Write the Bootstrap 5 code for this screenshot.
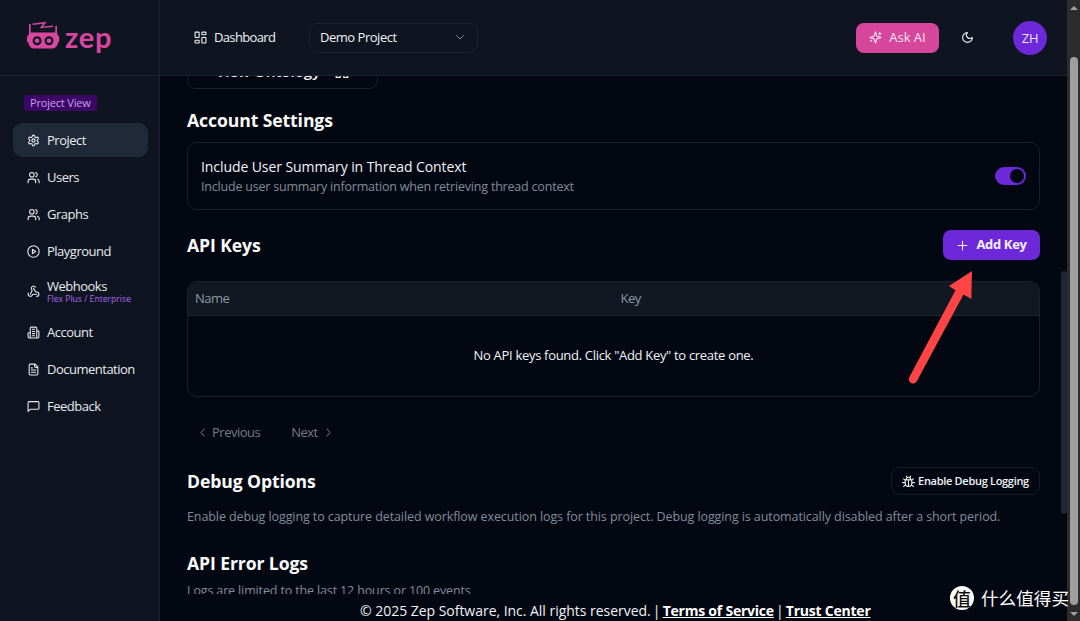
<!DOCTYPE html>
<html lang="en">
<head>
<meta charset="utf-8">
<meta name="viewport" content="width=device-width, initial-scale=1">
<title>Zep – Project</title>
<link href="https://cdn.jsdelivr.net/npm/bootstrap@5.3.0/dist/css/bootstrap.min.css" rel="stylesheet">
<style>
  :root { --page:#030711; --panel:#0e1420; --line:#1a222f; --violet:#6d28d9; --muted:#828c99; }
  body { font-family:"Open Sans","Noto Sans",sans-serif; font-size:13px; line-height:18px; background:var(--page); color:#f1f3f6; }
  svg { flex:none; }
  .ic { fill:none; stroke:currentColor; stroke-width:2; stroke-linecap:round; stroke-linejoin:round; }
  .sidebar { width:160px; background:var(--panel); border-right:1px solid var(--line); }
  .brand { height:76px; padding:0 0 0 27px; border-bottom:1px solid #1c2533; color:#d946a0; }
  .brand-name { font-family:Lato,sans-serif; font-weight:700; font-size:29px; line-height:36px; letter-spacing:.7px; }
  .view-tag { background:#3b0764; color:#c9a0f5; border-radius:3px; font-size:11px; line-height:16px; padding:0 6px; width:73px; margin:19px 0 12px 24px; white-space:nowrap; letter-spacing:-.18px; }
  .side-nav { gap:3px; padding:0 11px 0 13px; }
  .side-nav .nav-link { height:34px; padding:0 0 0 14px; gap:7px; border-radius:9px; color:#e8ebef; white-space:nowrap; font-weight:500; letter-spacing:-.5px; }
  .side-nav .nav-link.active { background:#1f2937; }
  .side-nav .nav-link.tall { height:41px; }
  .plan { font-size:8.5px; line-height:10px; color:#b06af0; letter-spacing:.05px; }
  .topbar { height:76px; background:var(--panel); border-bottom:1px solid #1c2533; padding:0 20px 0 34px; }
  .dash { width:62px; white-space:nowrap; font-weight:500; letter-spacing:-.65px; padding-bottom:1px; }
  .project-select { width:169px; height:30px; margin-left:33px; padding:0 11px 1px 10px; border:1px solid #1c2431; border-radius:9px; font-weight:500; letter-spacing:-.48px; }
  .ask { width:83px; height:30px; border-radius:8px; background:#d6479c; color:#fbe4f2; }
  .avatar { width:34px; height:34px; background:var(--violet); color:#ece4fb; letter-spacing:-.3px; }
  .scroll-area { height:518px; padding:0 27px; }
  .ontology { width:191px; height:36px; margin-top:-23px; border:1px solid var(--line); border-radius:9px; font-size:15px; font-weight:600; }
  .title-row { height:30px; }
  h2 { font-size:17.6px; line-height:24px; font-weight:700; margin:0 0 1px; color:#fafafa; letter-spacing:-.1px; }
  .panel-box { border:1px solid var(--line); border-radius:10px; }
  .setting { height:68px; margin-top:7px; padding:0 13px 0; }
  .set-name { font-size:14px; line-height:20px; font-weight:500; letter-spacing:-.08px; }
  .set-desc { font-size:12.5px; line-height:19px; letter-spacing:-.2px; }
  .dim { color:var(--muted); }
  .toggle { width:31px; height:18px; background:var(--violet); padding:2px; }
  .knob { width:14px; height:14px; background:var(--page); }
  .add { width:97px; height:30px; border-radius:8px; background:var(--violet); font-weight:700; color:#f5f0fe; letter-spacing:-.33px; }
  .keys { height:116px; margin-top:21px; }
  .keys-head { height:34px; background:#111822; border-bottom:1px solid #1c2531; padding:0 7px 1px; color:#8e97a3; font-weight:500; letter-spacing:-.5px; }
  .empty { padding-top:30px; font-weight:500; letter-spacing:-.31px; }
  .pager { height:30px; margin-top:20px; padding:0 0 0 13px; gap:31px; color:#747b86; font-weight:500; letter-spacing:-.5px; }
  .debug-btn { width:149px; height:28px; border:1px solid #171e2a; border-radius:9px; font-size:11px; font-weight:600; white-space:nowrap; letter-spacing:-.3px; }
  .long { font-size:12.5px; letter-spacing:-.09px; }
  .logs { font-size:12.5px; letter-spacing:-.14px; }
  .foot { height:27px; padding:4px 0 0 200px; font-size:14px; line-height:26px; white-space:nowrap; font-weight:500; letter-spacing:-.03px; }
  .foot a { color:#fff; font-weight:700; letter-spacing:-.23px; }
  .sep { width:12px; text-align:center; }
  .inner-thumb { left:1061px; top:271px; width:6px; height:243px; background:#1e2735; border-radius:3px; }
  .gutter { width:13px; background:#2c2c2c; padding:6px 0 5px; }
  .gutter-thumb { width:8px; height:548px; margin-top:47px; background:#9f9f9f; border-radius:4px; }
  .pointer-arrow { left:900px; top:262px; }
  .stamp { left:950px; top:585px; gap:7px; font-family:"Noto Sans CJK SC",sans-serif; font-size:17.6px; line-height:26px; color:#fff; }
  .stamp-seal { width:24px; height:24px; background:#fff; color:#111; font-size:18px; line-height:24px; font-weight:500; }
</style>
</head>
<body class="overflow-hidden">
<div class="d-flex vh-100 position-relative overflow-hidden">

  <aside class="sidebar flex-shrink-0">
    <div class="brand d-flex">
      <svg width="33" height="29" viewBox="0 0 33 29" style="margin-top:21px" fill="currentColor">
        <path d="M2 3h1.700v8.500h24.600V5H30v7.500l1.300 2.200.9 1v5l-1 .6c-.7 3.500-2.600 6.200-6 6.200H7c-3.400 0-5-2.700-5.800-6.200L0 20.700v-5l1-1 1-2.200z"/>
        <path d="M5.500 3.200 18 1.800 14.300 6.400 26 5.200" fill="none" stroke="currentColor" stroke-width="1.500"/>
        <g fill="none" stroke="#0e1420" stroke-width="2.200"><circle cx="10.100" cy="19.700" r="3.400"/><circle cx="22" cy="19.700" r="3.400"/></g>
      </svg>
      <span class="brand-name" style="margin:19px 0 0 5px">zep</span>
    </div>
    <div class="view-tag">Project View</div>
    <nav class="side-nav nav flex-column">
      <a class="nav-link active d-flex align-items-center" href="#"><svg class="ic" width="13" height="13" viewBox="0 0 24 24"><path d="M12.220 2h-.44a2 2 0 0 0-2 2v.18a2 2 0 0 1-1 1.730l-.43.25a2 2 0 0 1-2 0l-.15-.08a2 2 0 0 0-2.730.73l-.22.38a2 2 0 0 0 .73 2.730l.15.1a2 2 0 0 1 1 1.720v.51a2 2 0 0 1-1 1.740l-.15.09a2 2 0 0 0-.73 2.730l.22.38a2 2 0 0 0 2.730.73l.15-.08a2 2 0 0 1 2 0l.43.25a2 2 0 0 1 1 1.730V20a2 2 0 0 0 2 2h.44a2 2 0 0 0 2-2v-.18a2 2 0 0 1 1-1.730l.43-.25a2 2 0 0 1 2 0l.15.08a2 2 0 0 0 2.730-.73l.22-.39a2 2 0 0 0-.73-2.730l-.15-.08a2 2 0 0 1-1-1.740v-.5a2 2 0 0 1 1-1.740l.15-.09a2 2 0 0 0 .73-2.730l-.22-.38a2 2 0 0 0-2.730-.73l-.15.08a2 2 0 0 1-2 0l-.43-.25a2 2 0 0 1-1-1.730V4a2 2 0 0 0-2-2z"/><circle cx="12" cy="12" r="3"/></svg>Project</a>
      <a class="nav-link d-flex align-items-center" href="#"><svg class="ic" width="13" height="13" viewBox="0 0 24 24"><path d="M16 21.500v-2a4.500 4.500 0 0 0-4.500-4.500h-5A4.500 4.500 0 0 0 2 19.500v2"/><circle cx="9" cy="7" r="4.200"/><path d="M22.500 21.500v-2a4.500 4.500 0 0 0-3.300-4.300M16 3a4.200 4.200 0 0 1 0 8"/></svg>Users</a>
      <a class="nav-link d-flex align-items-center" href="#"><svg class="ic" width="13" height="13" viewBox="0 0 24 24"><path d="M16 21.500v-2a4.500 4.500 0 0 0-4.500-4.500h-5A4.500 4.500 0 0 0 2 19.500v2"/><circle cx="9" cy="7" r="4.200"/><path d="M22.500 21.500v-2a4.500 4.500 0 0 0-3.300-4.300M16 3a4.200 4.200 0 0 1 0 8"/></svg>Graphs</a>
      <a class="nav-link d-flex align-items-center" href="#"><svg class="ic" width="13" height="13" viewBox="0 0 24 24"><circle cx="12" cy="12" r="10.500"/><path d="m10 8 6 4-6 4z"/></svg>Playground</a>
      <a class="nav-link tall d-flex align-items-center" href="#"><svg class="ic" width="13" height="13" viewBox="0 0 24 24"><path d="M18 16.980h-5.990c-1.100 0-1.950.94-2.480 1.900A4 4 0 0 1 2 17c.01-.7.200-1.400.57-2"/><path d="m6 17 3.130-5.780c.53-.97.1-2.180-.5-3.100a4 4 0 1 1 6.890-4.060"/><path d="m12 6 3.130 5.730C15.660 12.700 16.900 13 18 13a4 4 0 0 1 0 8"/></svg><span class="d-flex flex-column"><span style="line-height:15px">Webhooks</span><span class="plan">Flex Plus / Enterprise</span></span></a>
      <a class="nav-link d-flex align-items-center" href="#"><svg class="ic" width="13" height="13" viewBox="0 0 24 24"><path d="M6 22V4a2 2 0 0 1 2-2h8a2 2 0 0 1 2 2v18zM6 12H4a2 2 0 0 0-2 2v6a2 2 0 0 0 2 2h2M18 9h2a2 2 0 0 1 2 2v9a2 2 0 0 1-2 2h-2M10 6h4M10 10h4M10 14h4M10 18h4"/></svg>Account</a>
      <a class="nav-link d-flex align-items-center" href="#"><svg class="ic" width="13" height="13" viewBox="0 0 24 24"><path d="M15 2H6a2 2 0 0 0-2 2v16a2 2 0 0 0 2 2h12a2 2 0 0 0 2-2V7zM14 2v4a2 2 0 0 0 2 2h4M10 9H8M16 13H8M16 17H8"/></svg>Documentation</a>
      <a class="nav-link d-flex align-items-center" href="#"><svg class="ic" width="13" height="13" viewBox="0 0 24 24"><path d="M22 15a2 2 0 0 1-2 2H6.500L2 21V5a2 2 0 0 1 2-2h16a2 2 0 0 1 2 2z"/></svg>Feedback</a>
    </nav>
  </aside>

  <div class="flex-grow-1 d-flex flex-column">
    <header class="topbar d-flex align-items-center">
      <svg class="ic" width="13" height="13" viewBox="0 0 24 24"><rect x="2" y="2" width="7.500" height="10" rx="1"/><rect x="14.500" y="2" width="7.500" height="5" rx="1"/><rect x="14.500" y="12" width="7.500" height="10" rx="1"/><rect x="2" y="17" width="7.500" height="5" rx="1"/></svg>
      <span class="dash" style="margin-left:7px">Dashboard</span>
      <div class="project-select d-flex align-items-center justify-content-between"><span>Demo Project</span><svg class="ic opacity-50" width="12" height="12" viewBox="0 0 24 24"><path d="m5 9 7 7 7-7"/></svg></div>
      <button class="ask btn p-0 border-0 ms-auto d-flex align-items-center justify-content-center" style="font-size:13px;gap:7px"><svg class="ic" width="13" height="13" viewBox="0 0 24 24"><path d="M9.940 15.500A2 2 0 0 0 8.500 14.060l-6.140-1.580a.5.5 0 0 1 0-.96L8.500 9.940A2 2 0 0 0 9.940 8.500l1.580-6.140a.5.5 0 0 1 .96 0L14.060 8.500a2 2 0 0 0 1.440 1.440l6.140 1.580a.5.5 0 0 1 0 .96l-6.140 1.580a2 2 0 0 0-1.440 1.440l-1.580 6.140a.5.5 0 0 1-.96 0zM20 3v4M22 5h-4M4 17v2M5 18H3"/></svg><span>Ask AI</span></button>
      <svg class="ic" style="margin:0 39px 0 22px" width="13" height="13" viewBox="0 0 24 24"><path d="M12 3a6 6 0 0 0 9 9 9 9 0 1 1-9-9"/></svg>
      <div class="avatar rounded-circle d-flex align-items-center justify-content-center">ZH</div>
    </header>

    <main class="scroll-area overflow-hidden">
      <div class="ontology d-flex align-items-center justify-content-center"><span>View Ontology</span><svg class="ic" style="margin-left:15px" width="14" height="14" viewBox="0 0 24 24"><path d="M2 2h7v7H2zM15 2h7v7h-7zM2 15h7v8H2zM15 15h7v8h-7z"/></svg></div>
      <div class="title-row d-flex align-items-center" style="margin-top:16px"><h2>Account Settings</h2></div>
      <section class="panel-box setting d-flex align-items-center justify-content-between">
        <div><div class="set-name">Include User Summary in Thread Context</div><div class="dim set-desc">Include user summary information when retrieving thread context</div></div>
        <div class="toggle rounded-pill d-flex justify-content-end"><span class="knob rounded-circle"></span></div>
      </section>
      <div class="title-row d-flex align-items-center justify-content-between" style="margin-top:20px"><h2>API Keys</h2>
        <button class="add btn p-0 border-0 d-flex align-items-center justify-content-center" style="font-size:13px;gap:7px"><svg class="ic" width="13" height="13" viewBox="0 0 24 24"><path d="M4 12h16M12 4v16"/></svg><span>Add Key</span></button></div>
      <section class="panel-box keys overflow-hidden">
        <div class="keys-head row g-0 align-items-center"><div class="col-6">Name</div><div class="col-6" style="padding-left:7px">Key</div></div>
        <div class="text-center empty">No API keys found. Click "Add Key" to create one.</div>
      </section>
      <div class="pager d-flex align-items-center">
        <span class="d-flex align-items-center"><svg class="ic" style="margin-right:7px" width="5" height="9" viewBox="0 0 10 18"><path d="M8 2 2 9l6 7"/></svg>Previous</span>
        <span class="d-flex align-items-center">Next<svg class="ic" style="margin-left:8px" width="5" height="9" viewBox="0 0 10 18"><path d="m2 2 6 7-6 7"/></svg></span>
      </div>
      <div class="title-row d-flex align-items-center justify-content-between" style="margin-top:19px"><h2>Debug Options</h2>
        <div class="debug-btn d-flex align-items-center justify-content-center" style="gap:3px"><svg class="ic" width="13" height="13" viewBox="0 0 24 24"><path d="m8 2 2 3M16 2l-2 3M8 8a4 4 0 0 1 8 0M6 9h12v6a6 6 0 0 1-12 0zM12 11v10M6 10 3 7M18 10l3-3M6 14H1M18 14h5M7 18l-4 3M17 18l4 3"/></svg>Enable Debug Logging</div></div>
      <p class="dim long mb-0" style="margin-top:12px">Enable debug logging to capture detailed workflow execution logs for this project. Debug logging is automatically disabled after a short period.</p>
      <div class="title-row d-flex align-items-center" style="margin-top:22px"><h2>API Error Logs</h2></div>
      <p class="dim logs mb-0" style="margin-top:4px">Logs are limited to the last 12 hours or 100 events</p>
    </main>
    <footer class="foot d-flex"><span>© 2025 Zep Software, Inc. All rights reserved.</span><span class="sep">|</span><a href="#">Terms of Service</a><span class="sep">|</span><a href="#">Trust Center</a></footer>
  </div>

  <div class="gutter flex-shrink-0 d-flex flex-column align-items-center">
    <svg width="8" height="4"><path d="M4 0 8 4H0z" fill="#a0a0a0"/></svg>
    <div class="gutter-thumb"></div>
    <svg class="mt-auto" width="8" height="4"><path d="M0 0h8L4 4z" fill="#a0a0a0"/></svg>
  </div>

  <div class="inner-thumb position-absolute"></div>
  <svg class="pointer-arrow position-absolute" width="82" height="126" viewBox="900 262 82 126"><path d="M972 271 949 286l6.500 4.300-46.200 87a4.200 4.200 0 0 0 7.500 4L963.500 294.500l7.800 4.500z" fill="#fe4444"/></svg>
  <div class="stamp position-absolute d-flex align-items-center text-nowrap"><span class="stamp-seal rounded-circle text-center overflow-hidden">值</span><span>什么值得买</span></div>
</div>
<script src="https://cdn.jsdelivr.net/npm/bootstrap@5.3.0/dist/js/bootstrap.bundle.min.js"></script>
</body>
</html>
